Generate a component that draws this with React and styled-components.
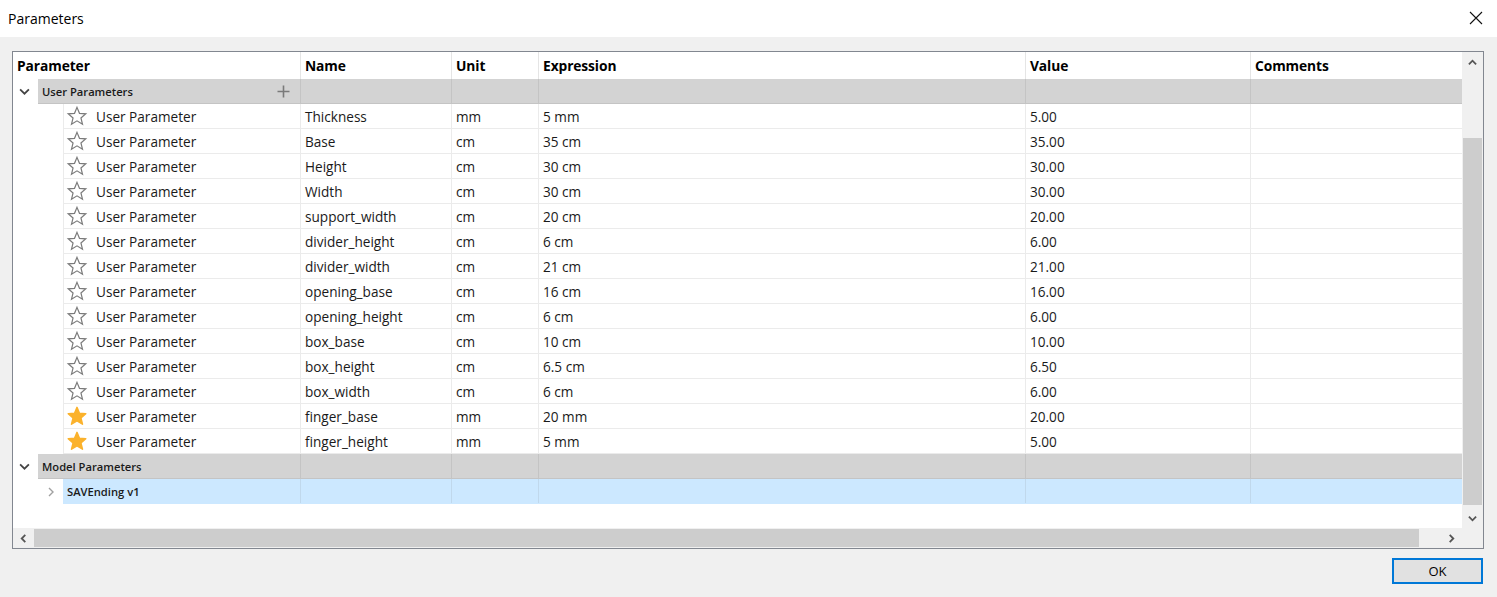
import React from 'react';
import styled, { createGlobalStyle } from 'styled-components';

const GlobalStyle = createGlobalStyle`
  html, body {
    margin: 0;
    padding: 0;
    background: #f0f0f0;
  }
  body {
    font-family: 'Open Sans', 'Noto Sans', 'DejaVu Sans', sans-serif;
    color: #1a1a1a;
  }
`;

const COLS = '151px 87px 487px 225px 212px';

const Dialog = styled.div`
  width: 1497px;
  height: 597px;
  display: flex;
  flex-direction: column;
  overflow: hidden;
`;

const TitleBar = styled.div`
  height: 37px;
  background: #fff;
  display: flex;
  align-items: center;
  justify-content: space-between;
  padding: 0 14px 0 8px;
  font-size: 14px;
  color: #000;
`;

const CloseButton = styled.div`
  width: 14px;
  height: 14px;
  display: flex;
  margin-top: -1px;
`;

const Body = styled.div`
  flex: 1;
  background: #f0f0f0;
  padding: 14px 13px 0 12px;
  display: flex;
  flex-direction: column;
`;

const Frame = styled.div`
  width: 1470px;
  height: 496px;
  border: 1px solid #828790;
  background: #fff;
  display: grid;
  grid-template-columns: 1449px 21px;
  grid-template-rows: 476px 20px;
`;

const Content = styled.div`
  overflow: hidden;
  background: #fff;
`;

const HeaderRow = styled.div`
  height: 27px;
  display: grid;
  grid-template-columns: 287px ${COLS};
`;

const HeaderCell = styled.div`
  display: flex;
  align-items: center;
  padding-left: 4px;
  font-size: 13.8px;
  font-weight: 700;
  color: #000;
  letter-spacing: -0.1px;
  border-left: ${(p) => (p.first ? 'none' : '1px solid #e5e5e5')};
`;

const Row = styled.div`
  height: 25px;
  display: flex;
`;

const Gutter = styled.div`
  width: ${(p) => p.width}px;
  flex: none;
  display: flex;
  align-items: center;
  padding-left: ${(p) => (p.pad || 0)}px;
  box-sizing: border-box;
`;

const Cells = styled.div`
  flex: 1;
  display: grid;
  grid-template-columns: ${(p) => p.first}px ${COLS};
  background: ${(p) => p.bg};
  border-bottom: 1px solid ${(p) => p.line};
  border-left: ${(p) => (p.leftLine ? `1px solid ${p.line}` : 'none')};
`;

const Cell = styled.div`
  display: flex;
  align-items: center;
  padding-left: 4px;
  font-size: ${(p) => (p.small ? '11.2px' : '13.6px')};
  font-weight: ${(p) => (p.small ? 600 : 400)};
  white-space: nowrap;
  overflow: hidden;
  border-left: ${(p) => (p.first ? 'none' : `1px solid ${p.line}`)};
  justify-content: ${(p) => (p.spread ? 'space-between' : 'flex-start')};
  padding-right: ${(p) => (p.spread ? '10px' : '0')};
`;

const ParamLabel = styled.span`
  display: flex;
  align-items: center;
  gap: 8px;
  margin-left: -2px;
`;

const VScroll = styled.div`
  background: #f0f0f0;
  display: flex;
  flex-direction: column;
  align-items: center;
`;

const ArrowBox = styled.div`
  width: 21px;
  height: ${(p) => p.size || 20}px;
  display: flex;
  align-items: center;
  justify-content: center;
  flex: none;
`;

const VThumb = styled.div`
  width: 19px;
  margin-top: 66px;
  height: 367px;
  background: #cdcdcd;
`;

const Spacer = styled.div`
  flex: 1;
`;

const HScroll = styled.div`
  background: #f0f0f0;
  display: flex;
  align-items: center;
`;

const HThumb = styled.div`
  width: 1385px;
  height: 18px;
  background: #cdcdcd;
`;

const Corner = styled.div`
  background: #f0f0f0;
`;

const Footer = styled.div`
  display: flex;
  justify-content: flex-end;
  padding-top: 9px;
  padding-right: 1px;
`;

const OkButton = styled.button`
  width: 91px;
  height: 26px;
  box-sizing: border-box;
  border: 2px solid #0078d7;
  background: #e1e1e1;
  font-family: inherit;
  font-size: 13px;
  color: #000;
  padding: 0;
`;

const Star = ({ filled }) => (
  <svg width="22" height="22" viewBox="0 0 24 24">
    <polygon
      points="12,2.6 14.7,9.1 21.6,9.6 16.3,14.2 18,21 12,17.3 6,21 7.7,14.2 2.4,9.6 9.3,9.1"
      fill={filled ? '#fbb22c' : 'none'}
      stroke={filled ? '#fbb22c' : '#7b7b7b'}
      strokeWidth={filled ? 1.6 : 1.3}
      strokeLinejoin={filled ? 'round' : 'miter'}
    />
  </svg>
);

const Chevron = ({ dir, color = '#555', size = 10, width = 1.6 }) => {
  const pts = {
    down: '1,3 5,7 9,3',
    up: '1,7 5,3 9,7',
    right: '3,1 7,5 3,9',
    left: '7,1 3,5 7,9',
  }[dir];
  return (
    <svg width={size} height={size} viewBox="0 0 10 10">
      <polyline points={pts} fill="none" stroke={color} strokeWidth={width} />
    </svg>
  );
};

const Plus = () => (
  <svg width="13" height="13" viewBox="0 0 13 13">
    <path d="M6.5 0.5v12M0.5 6.5h12" stroke="#7a7a7a" strokeWidth="1.6" />
  </svg>
);

const params = [
  ['Thickness', 'mm', '5 mm', '5.00'],
  ['Base', 'cm', '35 cm', '35.00'],
  ['Height', 'cm', '30 cm', '30.00'],
  ['Width', 'cm', '30 cm', '30.00'],
  ['support_width', 'cm', '20 cm', '20.00'],
  ['divider_height', 'cm', '6 cm', '6.00'],
  ['divider_width', 'cm', '21 cm', '21.00'],
  ['opening_base', 'cm', '16 cm', '16.00'],
  ['opening_height', 'cm', '6 cm', '6.00'],
  ['box_base', 'cm', '10 cm', '10.00'],
  ['box_height', 'cm', '6.5 cm', '6.50'],
  ['box_width', 'cm', '6 cm', '6.00'],
  ['finger_base', 'mm', '20 mm', '20.00', true],
  ['finger_height', 'mm', '5 mm', '5.00', true],
];

const headers = ['Parameter', 'Name', 'Unit', 'Expression', 'Value', 'Comments'];

const GroupRow = ({ label, plus }) => (
  <Row>
    <Gutter width={25} pad={6}>
      <Chevron dir="down" color="#444" size={11} />
    </Gutter>
    <Cells first={262} bg="#d3d3d3" line="#c4c4c4">
      <Cell first small spread={plus} line="#c4c4c4">
        {label}
        {plus && <Plus />}
      </Cell>
      {[0, 1, 2, 3, 4].map((i) => (
        <Cell key={i} line="#c4c4c4" />
      ))}
    </Cells>
  </Row>
);

const ParamRow = ({ name, unit, expr, value, fav }) => (
  <Row>
    <Gutter width={50} />
    <Cells first={236} bg="#fff" line="#ebebeb" leftLine>
      <Cell first line="#ebebeb">
        <ParamLabel>
          <Star filled={fav} />
          User Parameter
        </ParamLabel>
      </Cell>
      <Cell line="#ebebeb">{name}</Cell>
      <Cell line="#ebebeb">{unit}</Cell>
      <Cell line="#ebebeb">{expr}</Cell>
      <Cell line="#ebebeb">{value}</Cell>
      <Cell line="#ebebeb" />
    </Cells>
  </Row>
);

export default function App() {
  return (
    <Dialog>
      <GlobalStyle />
      <TitleBar>
        Parameters
        <CloseButton>
          <svg width="14" height="14" viewBox="0 0 14 14">
            <path d="M1 1L13 13M13 1L1 13" stroke="#111" strokeWidth="1.1" />
          </svg>
        </CloseButton>
      </TitleBar>
      <Body>
        <Frame>
          <Content>
            <HeaderRow>
              {headers.map((h, i) => (
                <HeaderCell key={h} first={i === 0}>
                  {h}
                </HeaderCell>
              ))}
            </HeaderRow>
            <GroupRow label="User Parameters" plus />
            {params.map(([name, unit, expr, value, fav]) => (
              <ParamRow key={name} name={name} unit={unit} expr={expr} value={value} fav={fav} />
            ))}
            <GroupRow label="Model Parameters" />
            <Row>
              <Gutter width={50} pad={33}>
                <Chevron dir="right" color="#a0a0a0" size={10} width={1.4} />
              </Gutter>
              <Cells first={237} bg="#cce8ff" line="#cce8ff">
                <Cell first small line="#cce8ff">
                  SAVEnding v1
                </Cell>
                {[0, 1, 2, 3, 4].map((i) => (
                  <Cell key={i} line="#c0d8ec" />
                ))}
              </Cells>
            </Row>
          </Content>
          <VScroll>
            <ArrowBox size={20}>
              <Chevron dir="up" color="#555" size={9} width={2} />
            </ArrowBox>
            <VThumb />
            <Spacer />
            <ArrowBox size={20}>
              <Chevron dir="down" color="#555" size={9} width={2} />
            </ArrowBox>
          </VScroll>
          <HScroll>
            <ArrowBox size={20}>
              <Chevron dir="left" color="#555" size={9} width={2} />
            </ArrowBox>
            <HThumb />
            <Spacer />
            <ArrowBox size={20}>
              <Chevron dir="right" color="#555" size={9} width={2} />
            </ArrowBox>
          </HScroll>
          <Corner />
        </Frame>
        <Footer>
          <OkButton>OK</OkButton>
        </Footer>
      </Body>
    </Dialog>
  );
}
